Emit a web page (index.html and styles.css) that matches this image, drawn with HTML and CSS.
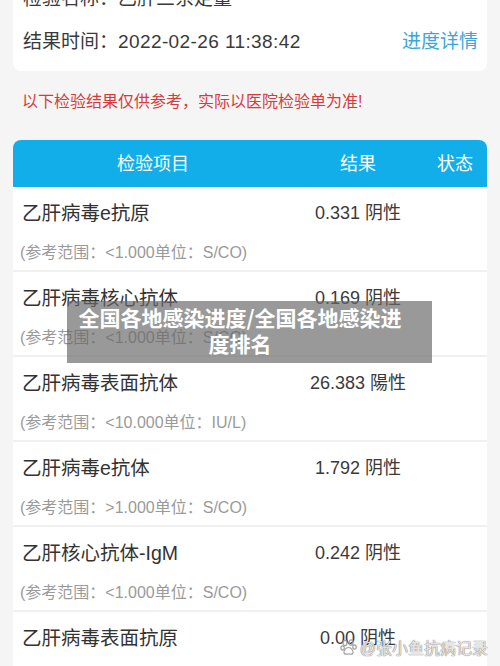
FILE: index.html
```html
<!DOCTYPE html>
<html lang="zh-CN">
<head>
    <meta charset="UTF-8">
    <meta name="viewport" content="width=device-width, initial-scale=1.0">
    <title>检验报告</title>
    <link rel="stylesheet" href="styles.css">
</head>
<body>
    <div class="page">
        <div class="info-card">
            <div class="info-row">检验名称：乙肝三系定量</div>
            <div class="info-row">
                <span>结果时间：<span class="date">2022-02-26 11:38:42</span></span>
                <a class="link">进度详情</a>
            </div>
        </div>

        <p class="notice">以下检验结果仅供参考，实际以医院检验单为准!</p>

        <div class="table">
            <div class="table-head">
                <span>检验项目</span>
                <span>结果</span>
                <span>状态</span>
            </div>
            <div class="item">
                <div class="item-name">乙肝病毒e抗原</div>
                <div class="item-result">0.331 阴性</div>
                <div class="item-status"></div>
                <div class="item-range">(参考范围：&lt;1.000单位：S/CO)</div>
            </div>
            <div class="item">
                <div class="item-name">乙肝病毒核心抗体</div>
                <div class="item-result">0.169 阴性</div>
                <div class="item-status"></div>
                <div class="item-range">(参考范围：&lt;1.000单位：S/CO)</div>
            </div>
            <div class="item">
                <div class="item-name">乙肝病毒表面抗体</div>
                <div class="item-result">26.383 陽性</div>
                <div class="item-status"></div>
                <div class="item-range">(参考范围：&lt;10.000单位：IU/L)</div>
            </div>
            <div class="item">
                <div class="item-name">乙肝病毒e抗体</div>
                <div class="item-result">1.792 阴性</div>
                <div class="item-status"></div>
                <div class="item-range">(参考范围：&gt;1.000单位：S/CO)</div>
            </div>
            <div class="item">
                <div class="item-name">乙肝核心抗体-IgM</div>
                <div class="item-result">0.242 阴性</div>
                <div class="item-status"></div>
                <div class="item-range">(参考范围：&lt;1.000单位：S/CO)</div>
            </div>
            <div class="item">
                <div class="item-name">乙肝病毒表面抗原</div>
                <div class="item-result">0.00 阴性</div>
                <div class="item-status"></div>
                <div class="item-range">(参考范围：&lt;0.050单位：IU/mL)</div>
            </div>
        </div>
    </div>

    <div class="caption">全国各地感染进度/全国各地感染进<br>度排名</div>

    <div class="watermark">
        <svg width="18" height="18" viewBox="0 0 18 18">
            <g fill="none" stroke="#a0a0a0" stroke-width="1.2">
                <ellipse cx="5" cy="5" rx="2" ry="2.6"/>
                <ellipse cx="11" cy="4.5" rx="2" ry="2.6"/>
                <ellipse cx="2.6" cy="10" rx="1.7" ry="2.1"/>
                <ellipse cx="14.5" cy="9" rx="1.7" ry="2.1"/>
                <path d="M8.5 9.5c-3 0-5 3.5-4.5 5.5.5 2 3 1 4.5 1s4 1 4.5-1c.5-2-1.5-5.5-4.5-5.5z"/>
            </g>
        </svg>
        <span>@张小鱼抗病记录</span>
    </div>
</body>
</html>
```

FILE: styles.css
```css
body { margin: 0; background: #f5f5f5; font-family: "Liberation Sans", "Noto Sans CJK SC", sans-serif; color: #333; overflow: hidden; }
.page { margin-top: -23px; }

.info-card { margin: 0 13px; padding: 0 9px 8px 10px; background: #fff; border-radius: 8px; }
.info-row { display: flex; justify-content: space-between; height: 43px; line-height: 43px; font-size: 19px; color: #3a3a3a; }
.date { letter-spacing: 0.4px; }
.link { color: #3aa6d9; }

.notice { margin: 0; padding: 19px 22px 26px; line-height: 24px; font-size: 16px; color: #d83a3c; }

.table { margin: 0 13px; background: #fff; border-radius: 8px 8px 0 0; overflow: hidden; }
.table-head { display: grid; grid-template-columns: 280px 130px 1fr; height: 47px; line-height: 49px; background: #12aee9; color: #fff; font-size: 18px; text-align: center; }

.item { display: grid; grid-template-columns: 280px 130px 1fr; padding-top: 6px; border-bottom: 2px solid #f0f0f0; }
.item-name { padding-left: 9px; height: 40px; line-height: 40px; font-size: 19.5px; color: #333; }
.item-result { height: 40px; line-height: 40px; font-size: 18px; color: #3a3a3a; text-align: center; }
.item-range { grid-column: 1 / 4; padding-left: 7px; height: 37px; line-height: 40px; font-size: 16px; color: #9a9a9a; }

.caption { position: absolute; left: 67px; top: 301px; width: 365px; height: 62px; box-sizing: border-box; padding: 3px 19px 0 0; background: rgba(105, 105, 105, 0.68); color: #fff; font-family: "Noto Sans CJK SC", sans-serif; font-size: 21px; font-weight: bold; line-height: 26px; text-align: center; }

.watermark { position: absolute; right: 12px; top: 635px; display: flex; align-items: center; gap: 2px; font-size: 16px; color: rgba(255, 255, 255, 0.8); text-shadow: 0 0 1px #777, 0 0 1px #777; }
```
